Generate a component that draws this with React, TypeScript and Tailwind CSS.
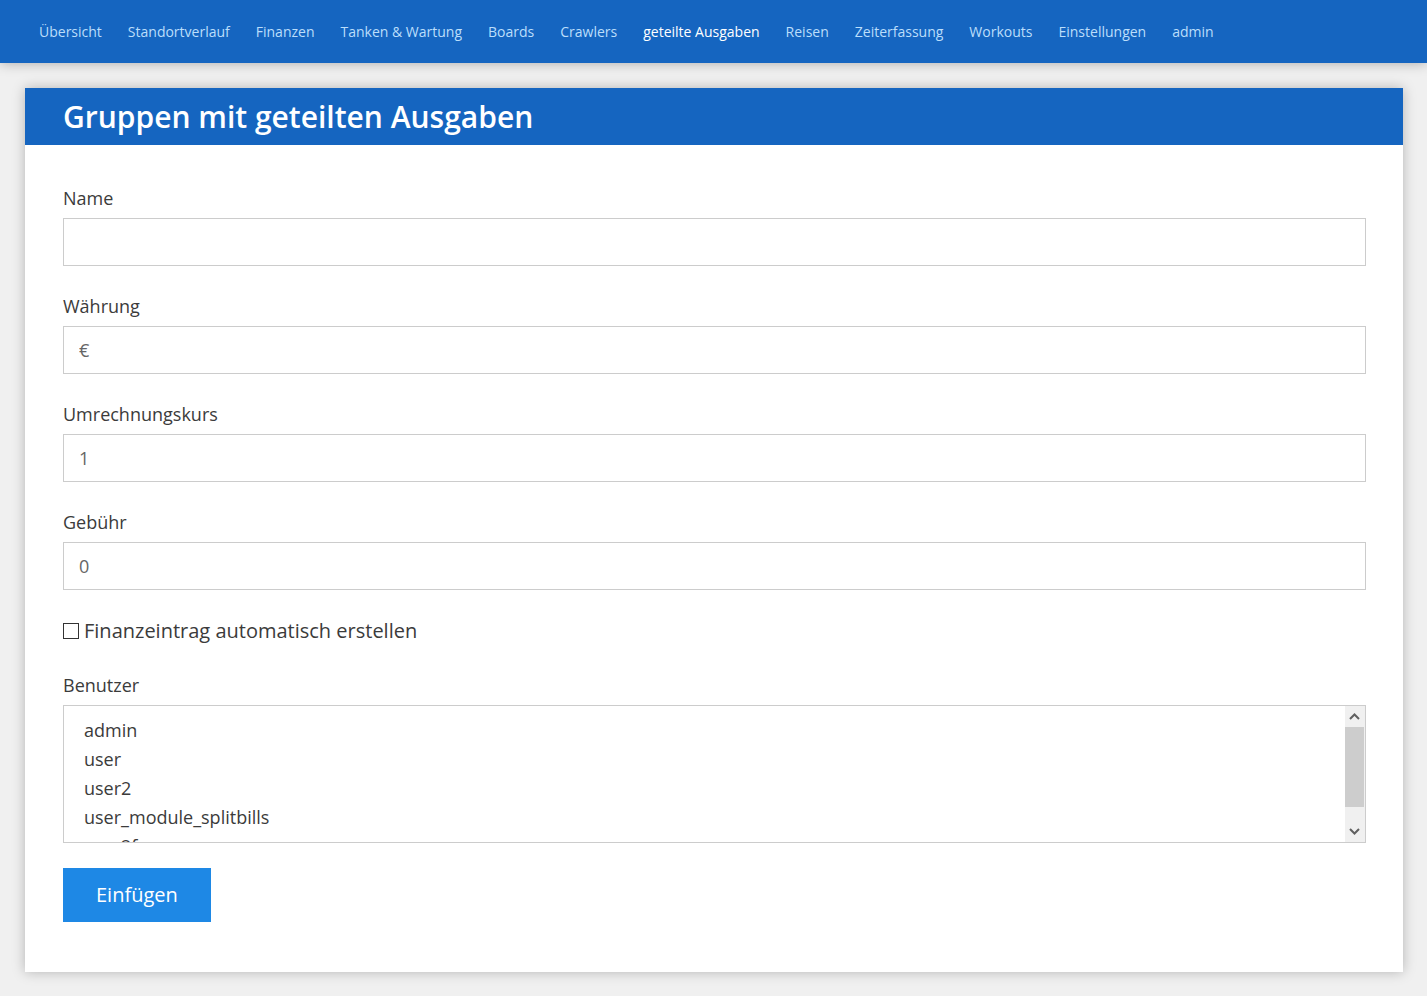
import React from "react";

const navItems = [
  "Übersicht",
  "Standortverlauf",
  "Finanzen",
  "Tanken & Wartung",
  "Boards",
  "Crawlers",
  "geteilte Ausgaben",
  "Reisen",
  "Zeiterfassung",
  "Workouts",
  "Einstellungen",
  "admin",
];

const activeItem = "geteilte Ausgaben";

const fields = [
  { id: "name", label: "Name", placeholder: "" },
  { id: "currency", label: "Währung", placeholder: "€" },
  { id: "exchange_rate", label: "Umrechnungskurs", placeholder: "1" },
  { id: "exchange_fee", label: "Gebühr", placeholder: "0" },
];

const users = ["admin", "user", "user2", "user_module_splitbills", "user2fa"];

function Navigation() {
  return (
    <nav className="bg-[#1565c0] px-[39px] py-5 shadow-[0_0_12px_rgba(0,0,0,0.3)]">
      <ul className="flex flex-wrap gap-x-[26px] text-[14px] leading-[23px]">
        {navItems.map((item) => (
          <li key={item}>
            <a
              href="#"
              aria-current={item === activeItem ? "page" : undefined}
              className={item === activeItem ? "text-white" : "text-[#bbdefb]"}
            >
              {item}
            </a>
          </li>
        ))}
      </ul>
    </nav>
  );
}

function TextField({ id, label, placeholder }: { id: string; label: string; placeholder: string }) {
  return (
    <div className="mb-7">
      <label htmlFor={id} className="mb-2 block text-[18px] leading-6">
        {label}
      </label>
      <input
        id={id}
        name={id}
        type="text"
        placeholder={placeholder}
        className="block h-12 w-full border border-[#ccc] bg-white px-[15px] text-[18px] outline-none placeholder:text-[#666]"
      />
    </div>
  );
}

function ScrollTrack() {
  return (
    <div aria-hidden="true" className="flex w-5 flex-col bg-[#f0f0f0]">
      <svg className="h-[21px] w-[19px]" viewBox="0 0 19 21" fill="none" stroke="#606060" strokeWidth="2">
        <path d="M5 13 9.5 8.5 14 13" />
      </svg>
      <div className="mr-px h-20 bg-[#cdcdcd]" />
      <svg className="mt-auto h-[21px] w-[19px]" viewBox="0 0 19 21" fill="none" stroke="#606060" strokeWidth="2">
        <path d="M5 8 9.5 12.5 14 8" />
      </svg>
    </div>
  );
}

export default function App() {
  return (
    <div className="min-h-screen bg-[#f0f0f0] font-['Open_Sans',sans-serif] text-[#3b3b3b]">
      <Navigation />
      <main className="pt-[25px] pr-6 pb-6 pl-[25px]">
        <section className="bg-white shadow-[0_0_12px_rgba(0,0,0,0.25)]">
          <header className="bg-[#1565c0] px-[38px] py-2">
            <h1 className="text-[30px] leading-[41px] font-semibold text-white">Gruppen mit geteilten Ausgaben</h1>
          </header>
          <form className="pt-[41px] pr-[37px] pb-[50px] pl-[38px]" onSubmit={(e) => e.preventDefault()}>
            {fields.map((field) => (
              <TextField key={field.id} {...field} />
            ))}
            <div className="mb-[30px] flex items-center gap-[5px]">
              <input
                id="add_finance_entries"
                type="checkbox"
                className="size-4 appearance-none border border-[#333] bg-white checked:bg-[#1e88e5]"
              />
              <label htmlFor="add_finance_entries" className="text-[20px] leading-[25px]">
                Finanzeintrag automatisch erstellen
              </label>
            </div>
            <label htmlFor="users" className="mb-2 block text-[18px] leading-6">
              Benutzer
            </label>
            <div className="mb-[25px] flex h-[138px] border border-[#ccc]">
              <select
                id="users"
                multiple
                className="min-w-0 flex-1 appearance-none overflow-y-auto bg-white px-4 py-3 text-[18px] outline-none [scrollbar-width:none]"
              >
                {users.map((user) => (
                  <option key={user} value={user} className="h-[29px] min-h-0 px-1 py-0 leading-[29px]">
                    {user}
                  </option>
                ))}
              </select>
              <ScrollTrack />
            </div>
            <button type="submit" className="block bg-[#1e88e5] px-[33px] py-[13px] text-[20px] leading-7 text-white">
              Einfügen
            </button>
          </form>
        </section>
      </main>
    </div>
  );
}
